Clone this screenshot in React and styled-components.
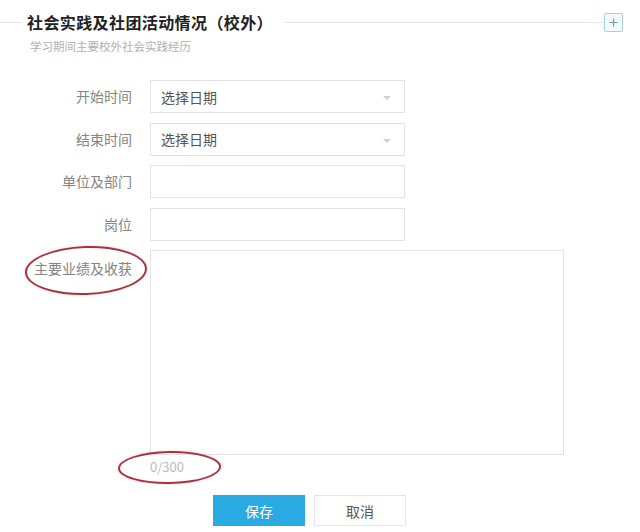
import React from 'react'
import styled, { createGlobalStyle } from 'styled-components'

const GlobalStyle = createGlobalStyle`
  html, body {
    margin: 0;
    padding: 0;
    background: #fff;
  }
  body {
    font-family: "Microsoft YaHei", "Noto Sans CJK SC", "Liberation Sans", sans-serif;
    color: #555;
  }
`

const Page = styled.div`
  width: 640px;
  height: 532px;
  overflow: hidden;
  padding-top: 13px;
  box-sizing: border-box;
`

const Header = styled.div`
  display: flex;
  align-items: center;
  height: 19px;
  padding-right: 17px;
`

const Rule = styled.div`
  height: 1px;
  background: #e6e6e6;
  flex: ${(p) => (p.grow ? 1 : 'none')};
  width: ${(p) => (p.grow ? 'auto' : '22px')};
`

const Title = styled.h2`
  margin: 0 12px 0 5px;
  font-size: 16px;
  font-weight: 700;
  letter-spacing: 0.4px;
  color: #222;
  white-space: nowrap;
  line-height: 19px;
`

const AddButton = styled.button`
  width: 19px;
  height: 19px;
  padding: 0;
  border: 1px solid #a8cfdc;
  border-radius: 2px;
  background: #f3fafc;
  display: flex;
  align-items: center;
  justify-content: center;
  box-sizing: border-box;
`

const Subtitle = styled.div`
  margin: 6px 0 0 30px;
  font-size: 11.5px;
  color: #b0b0b0;
  line-height: 16px;
`

const Form = styled.div`
  margin-top: 26px;
  display: flex;
  flex-direction: column;
  gap: 9.5px;
`

const Row = styled.div`
  display: grid;
  grid-template-columns: 132px auto;
  column-gap: 18px;
  align-items: ${(p) => (p.top ? 'start' : 'center')};
`

const Label = styled.label`
  position: relative;
  text-align: right;
  font-size: 14px;
  color: #848484;
  line-height: 33px;
  margin-top: ${(p) => (p.top ? '2px' : '0')};
`

const Field = styled.div`
  position: relative;
  width: 255px;
  height: 33px;
  border: 1px solid #e3e3e3;
  box-sizing: border-box;
  background: #fff;
  display: flex;
  align-items: center;
  padding: 0 10px;
  font-size: 14px;
  color: #555;
`

const Caret = styled.span`
  position: absolute;
  right: 13px;
  top: 15px;
  width: 0;
  height: 0;
  border-left: 4px solid transparent;
  border-right: 4px solid transparent;
  border-top: 4px solid #cfcfcf;
`

const TextBox = styled.div`
  width: 414px;
  height: 205px;
  border: 1px solid #e3e3e3;
  box-sizing: border-box;
`

const Counter = styled.div`
  position: relative;
  margin: 2px 0 0 150px;
  font-size: 13px;
  color: #b8b8b8;
  line-height: 20px;
  width: 40px;
`

const Mark = styled.span`
  position: absolute;
  left: ${(p) => p.left}px;
  top: ${(p) => p.top}px;
  width: ${(p) => p.w}px;
  height: ${(p) => p.h}px;
  border: 2.5px solid #a8323f;
  border-radius: 50%;
  box-sizing: border-box;
  transform: rotate(${(p) => p.rot || 0}deg);
  box-shadow: 0 0 2px rgba(200, 80, 90, 0.4);
  pointer-events: none;
`

const Actions = styled.div`
  display: flex;
  gap: 9px;
  margin: 18px 0 0 213px;
`

const Button = styled.button`
  width: 92px;
  height: 31px;
  font-family: inherit;
  font-size: 14px;
  border: 1px solid ${(p) => (p.primary ? '#2aaae2' : '#e6e6e6')};
  background: ${(p) => (p.primary ? '#2aaae2' : '#fff')};
  color: ${(p) => (p.primary ? '#fff' : '#555')};
  padding: 0;
`

const PlusIcon = () => (
  <svg width="9" height="9" viewBox="0 0 9 9">
    <path d="M4.5 0.5v8M0.5 4.5h8" stroke="#6f9aa8" strokeWidth="1.2" />
  </svg>
)

const fields = [
  { label: '开始时间', value: '选择日期', select: true },
  { label: '结束时间', value: '选择日期', select: true },
  { label: '单位及部门' },
  { label: '岗位' }
]

export default function App () {
  return (
    <Page>
      <GlobalStyle />
      <Header>
        <Rule />
        <Title>社会实践及社团活动情况（校外）</Title>
        <Rule grow />
        <AddButton><PlusIcon /></AddButton>
      </Header>
      <Subtitle>学习期间主要校外社会实践经历</Subtitle>
      <Form>
        {fields.map((f) => (
          <Row key={f.label}>
            <Label>{f.label}</Label>
            <Field>
              {f.value}
              {f.select && <Caret />}
            </Field>
          </Row>
        ))}
        <Row top>
          <Label top>
            主要业绩及收获
            <Mark left={25} top={-6} w={122} h={49} rot={-2} />
          </Label>
          <TextBox />
        </Row>
      </Form>
      <Counter>
        0/300
        <Mark left={-32} top={-6} w={103} h={33} rot={-1} />
      </Counter>
      <Actions>
        <Button primary>保存</Button>
        <Button>取消</Button>
      </Actions>
    </Page>
  )
}
